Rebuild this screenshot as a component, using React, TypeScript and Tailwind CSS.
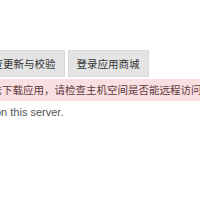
export default function App() {
  return (
    <div className="w-[200px] h-[200px] overflow-hidden bg-white font-['Microsoft_YaHei','Noto_Sans_CJK_SC',sans-serif] text-[10.5px] text-[#333]">
      <div className="ml-[-27px] w-[400px] pt-[50px]">
        <div className="flex gap-[3px]">
          <div className="h-[27px] px-[8px] flex items-center bg-[#e4e4e4] border border-[#d8d8d8]">检查更新与校验</div>
          <div className="h-[27px] px-[8px] flex items-center bg-[#e4e4e4] border border-[#d8d8d8]">登录应用商城</div>
        </div>
        <div className="mt-[2px] h-[22px] pl-[8px] flex items-center bg-[#f9dfe1] text-[#5e3a3d]">无法下载应用，请检查主机空间是否能远程访问</div>
      </div>
      <div className="mt-[3px] ml-[-5px] whitespace-nowrap font-['Liberation_Sans',sans-serif] text-[11px] text-[#555]"> on this server.</div>
    </div>
  );
}
